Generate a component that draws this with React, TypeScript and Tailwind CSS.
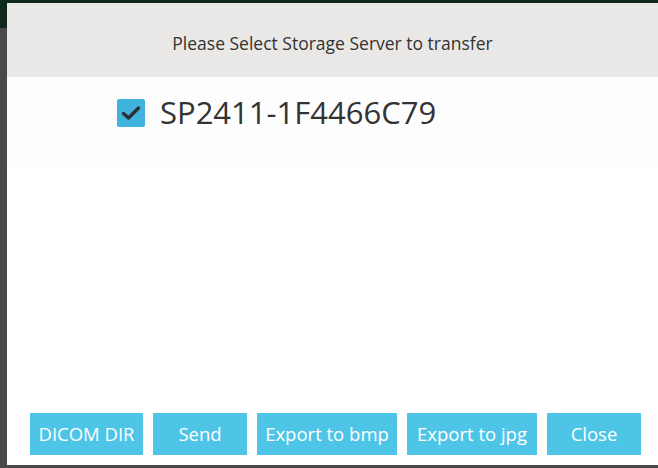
import React from "react";

export default function App() {
  const buttons = [
    { label: "DICOM DIR", w: "w-[113px]" },
    { label: "Send", w: "w-[94px]" },
    { label: "Export to bmp", w: "w-[140px]" },
    { label: "Export to jpg", w: "w-[130px]" },
    { label: "Close", w: "w-[94px]" },
  ];
  return (
    <div
      className="w-[658px] h-[468px] bg-[#4a4a4a] relative overflow-hidden"
      style={{ fontFamily: '"Open Sans", "Noto Sans", sans-serif' }}
    >
      <div className="absolute left-0 top-0 w-full h-[28px] bg-[#0f2a1c]" />
      <div className="absolute left-[7px] top-[3px] right-0 bottom-[3px] bg-white flex flex-col">
        <div className="h-[74px] bg-[#e9e8e6] flex items-center justify-center pt-[6px]">
          <span className="text-[17.5px] text-[#333333]">Please Select Storage Server to transfer</span>
        </div>
        <div className="flex-1 flex flex-col">
          <div className="h-[92px] bg-[#fdfdfd] flex items-start pl-[110px] pt-[20px]">
            <div className="flex items-center gap-[15px]">
              <div className="w-[28px] h-[28px] rounded-[2px] bg-[#3fb3dd] flex items-center justify-center">
                <svg width="20" height="16" viewBox="0 0 20 16">
                  <path d="M2.5 8.5 L7.5 13 L17.5 3" fill="none" stroke="#2c2f36" strokeWidth="3.4" strokeLinecap="round" strokeLinejoin="round" />
                </svg>
              </div>
              <span className="text-[31px] text-[#333333] leading-none">SP2411-1F4466C79</span>
            </div>
          </div>
          <div className="flex-1" />
          <div className="flex gap-[10px] pl-[23px] pb-[10px]">
            {buttons.map((b) => (
              <div
                key={b.label}
                className={`${b.w} h-[42px] bg-[#4ec5e7] text-white text-[18.5px] flex items-center justify-center`}
              >
                {b.label}
              </div>
            ))}
          </div>
        </div>
      </div>
    </div>
  );
}
